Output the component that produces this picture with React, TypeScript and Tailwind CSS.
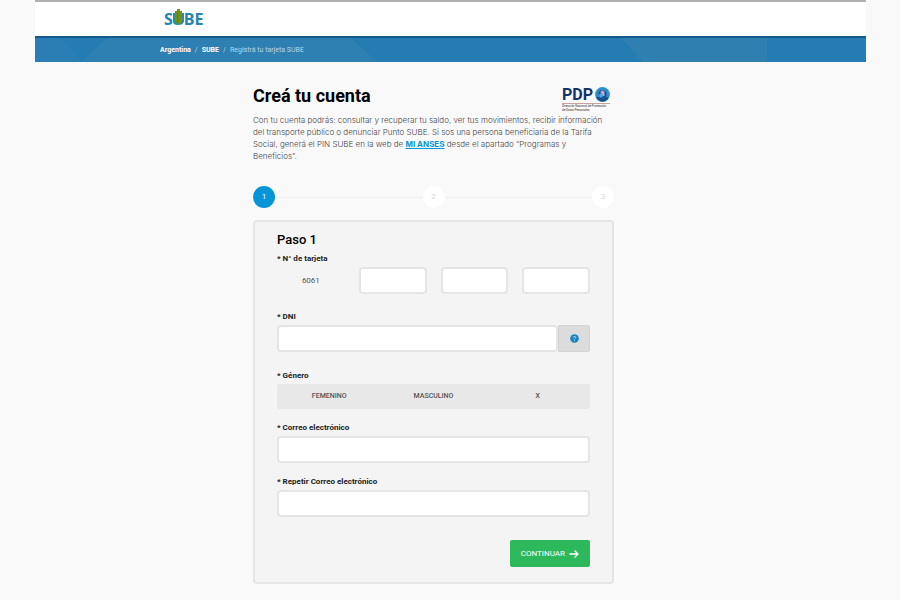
import React, { useState } from 'react';

const inputClass =
  'block w-full min-w-0 h-[27px] rounded-sm border-2 border-[#e5e5e5] bg-white px-2 text-[8px] text-[#333] outline-none focus:border-[#0695d6]';

const labelClass = 'block text-[8px] leading-[10px] font-bold text-[#222]';

const SubeLogo: React.FC = () => (
  <a href="#" aria-label="SUBE" className="flex items-center font-['Open_Sans',sans-serif] text-[16px] leading-[20px] font-bold text-[#2384b0]">
    <span>S</span>
    <svg className="w-[11px] h-[18px] -mt-1" viewBox="0 0 11 18" fill="none">
      <path d="M0 5v8.500q0 3.500 5 3.500t6-3.500V5" fill="#2f8a9a" />
      <path d="M4 1h3v2h2v11q-1.500 1.500-3.500 1.500T2 14V3h2z" fill="#71921c" />
      <path d="M4.500 3.500v11" stroke="#4d861f" />
    </svg>
    <span>BE</span>
  </a>
);

const PdpLogo: React.FC = () => (
  <div className="w-12 shrink-0 text-[#12346a]">
    <div className="flex items-center justify-between">
      <span className="text-[16px] leading-[17px] font-bold">PDP</span>
      <svg className="w-[15px] h-[15px]" viewBox="0 0 15 15">
        <circle cx="7.500" cy="7.500" r="7.400" fill="#2f8fca" />
        <path d="M1 10a7 7 0 0 0 12.500 1L11 9.500A5 5 0 0 1 4 10z" fill="#174e8c" />
        <circle cx="7.500" cy="7" r="4" fill="#1d4c8e" />
        <path d="M5.500 4.500q2-2 4 0v4.500h-3z" fill="#b7a7dc" />
        <circle cx="6" cy="8.500" r="2" fill="#4aa9df" />
      </svg>
    </div>
    <div className="whitespace-nowrap border-t border-[#c9a39a] text-[3px] leading-[4px] text-[#333]">
      Dirección Nacional de Protección
      <br />
      de Datos Personales
    </div>
  </div>
);

const Step: React.FC<{ number: number; active?: boolean }> = ({ number, active }) => (
  <li
    className={
      active
        ? 'flex w-[22px] h-[22px] items-center justify-center rounded-full bg-[#0695d6] text-[8px] text-white'
        : 'flex w-[22px] h-[22px] items-center justify-center rounded-full bg-white text-[8px] text-[#d8d8d8]'
    }
  >
    {number}
  </li>
);

const StepLine: React.FC = () => <li aria-hidden="true" className="h-px flex-1 bg-[#efefef]" />;

const genders = ['FEMENINO', 'MASCULINO', 'X'];

const App: React.FC = () => {
  const [gender, setGender] = useState('');

  return (
    <div className="min-h-screen bg-[#f9f9f9] pl-[35px] pr-[34px] pb-4 font-[Roboto,sans-serif] text-[#222]">
      <header className="border-t-2 border-[#b0b0b0] bg-white">
        <div className="mx-auto flex h-[34px] max-w-[581px] items-center px-1">
          <SubeLogo />
        </div>
      </header>

      <nav aria-label="Ruta" className="relative border-t-2 border-[#14598a] bg-[#257cb2]">
        <svg className="absolute inset-0 w-full h-full" viewBox="0 0 831 24" preserveAspectRatio="none">
          <path d="M0 0h24l24 24H0z" fill="#2a7eb3" />
          <path d="M72 0h244l26 24H46z" fill="#2e80b3" />
          <path d="M586 0h146v24H608z" fill="#2f80b1" />
        </svg>
        <ol className="relative mx-auto flex h-6 max-w-[581px] items-center gap-1 text-[7px] leading-[10px] text-[#b5d6e8]">
          <li><a href="#" className="font-bold text-white">Argentina</a></li>
          <li aria-hidden="true">/</li>
          <li><a href="#" className="font-bold text-white">SUBE</a></li>
          <li aria-hidden="true">/</li>
          <li>Registrá tu tarjeta SUBE</li>
        </ol>
      </nav>

      <main className="mx-auto max-w-[581px] pl-[93px] pt-6">
        <div className="w-full max-w-[361px]">
          <div className="flex items-start justify-between pr-1">
            <h1 className="text-[18px] leading-[20px] font-bold text-black">Creá tu cuenta</h1>
            <PdpLogo />
          </div>

          <p className="mt-0.5 font-[Inter,sans-serif] text-[8px] leading-[12px] font-light text-[#444]">
            Con tu cuenta podrás: consultar y recuperar tu saldo, ver tus movimientos, recibir información
            <br />
            del transporte público o denunciar Punto SUBE. Si sos una persona beneficiaria de la Tarifa
            <br />
            Social, generá el PIN SUBE en la web de{' '}
            <a href="#" className="font-bold text-[#0695d6] underline">MI ANSES</a> desde el apartado “Programas y
            <br />
            Beneficios”.
          </p>

          <ol className="mt-6 flex items-center">
            <Step number={1} active />
            <StepLine />
            <Step number={2} />
            <StepLine />
            <Step number={3} />
          </ol>

          <form
            className="mt-3 rounded-sm border-2 border-[#e5e5e5] bg-[#f4f4f4] px-[22px] pt-2 pb-[15px]"
            onSubmit={(e) => e.preventDefault()}
          >
            <h2 className="text-[13px] leading-[20px] font-medium text-black">Paso 1</h2>

            <label htmlFor="card-1" className={`${labelClass} mt-1`}>* N° de tarjeta</label>
            <div className="mt-[3px] grid grid-cols-4 items-center gap-[14px]">
              <span className="text-center text-[8px] text-[#555]">6061</span>
              <input id="card-1" type="text" inputMode="numeric" className={inputClass} />
              <input aria-label="Segundo grupo" type="text" inputMode="numeric" className={inputClass} />
              <input aria-label="Tercer grupo" type="text" inputMode="numeric" className={inputClass} />
            </div>

            <label htmlFor="dni" className={`${labelClass} mt-[18px]`}>* DNI</label>
            <div className="mt-[3px] flex">
              <input id="dni" type="text" className={inputClass} />
              <button type="button" aria-label="Ayuda" className="flex w-8 shrink-0 items-center justify-center rounded-r-xs border border-[#d4d4d4] bg-[#dcdcdc]">
                <svg className="w-[9px] h-[9px]" viewBox="0 0 9 9">
                  <circle cx="4.500" cy="4.500" r="4.300" fill="#1c83c0" />
                  <path d="M3.300 3.600q.2-1.100 1.300-1.100t1.200 1q0 .6-.7 1t-.6.900M4.500 6v.8" fill="none" stroke="#c5e2f1" strokeWidth=".9" />
                </svg>
              </button>
            </div>

            <fieldset className="mt-[19px]">
              <legend className={labelClass}>* Género</legend>
              <div className="mt-[3px] grid h-[25px] grid-cols-3 rounded-xs bg-[#e8e8e8]">
                {genders.map((name) => (
                  <label
                    key={name}
                    className="relative flex cursor-pointer items-center justify-center text-[7px] font-medium text-[#555] has-checked:bg-[#0695d6] has-checked:text-white"
                  >
                    <input
                      type="radio"
                      name="gender"
                      value={name}
                      checked={gender === name}
                      onChange={() => setGender(name)}
                      className="sr-only"
                    />
                    {name}
                  </label>
                ))}
              </div>
            </fieldset>

            <label htmlFor="email" className={`${labelClass} mt-[14px]`}>* Correo electrónico</label>
            <input id="email" type="email" className={`${inputClass} mt-[3px]`} />

            <label htmlFor="email-repeat" className={`${labelClass} mt-[14px]`}>* Repetir Correo electrónico</label>
            <input id="email-repeat" type="email" className={`${inputClass} mt-[3px]`} />

            <div className="mt-[23px] flex justify-end">
              <button
                type="submit"
                className="flex h-[27px] items-center gap-1 rounded-xs bg-[#2eb85c] px-[11px] text-[8px] text-white hover:bg-[#27a350]"
              >
                CONTINUAR
                <svg className="w-[10px] h-[10px]" viewBox="0 0 10 10" fill="none" stroke="currentColor" strokeWidth="1.300">
                  <path d="M.5 5h8.500M5.500 1.500 9 5 5.500 8.500" />
                </svg>
              </button>
            </div>
          </form>
        </div>
      </main>
    </div>
  );
};

export default App;
